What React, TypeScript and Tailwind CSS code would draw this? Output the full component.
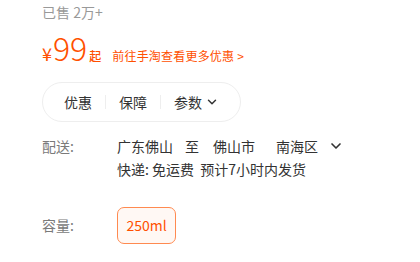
import { ChevronDown } from "lucide-react";

const font = { fontFamily: '"Noto Sans CJK SC", "Noto Sans", sans-serif' };

export default function App() {
  return (
    <div className="w-[420px] h-[262px] bg-white pl-[42px] text-[#333]" style={font}>
      {/* sales */}
      <div className="pt-[2px] text-[14px] leading-[20px] text-[#999]">已售 2万+</div>

      {/* price */}
      <div className="mt-[9px] flex items-baseline text-[#ff5000]">
        <span className="text-[18px] leading-none">¥</span>
        <span className="ml-[1px] text-[32px] leading-[32px] font-light">99</span>
        <span className="ml-[2px] text-[12px] font-medium">起</span>
        <span className="ml-[11px] text-[12px] tracking-[0.2px]">前往手淘查看更多优惠 &gt;</span>
      </div>

      {/* tabs */}
      <div className="mt-[17px] flex h-[40px] w-[199px] items-center rounded-full border border-[#eeeeee] text-[14px] text-[#333]">
        <span className="ml-[21px]">优惠</span>
        <span className="mx-[13px] h-[14px] w-px bg-[#eeeeee]" />
        <span>保障</span>
        <span className="mx-[13px] h-[14px] w-px bg-[#eeeeee]" />
        <span>参数</span>
        <ChevronDown className="ml-[3px] h-[14px] w-[14px]" strokeWidth={2.5} />
      </div>

      {/* delivery */}
      <div className="mt-[13px] flex text-[14px] leading-[22px]">
        <span className="w-[75px] text-[#7a7a7a]">配送:</span>
        <div className="flex flex-col">
          <div className="flex items-center">
            <span>广东佛山</span>
            <span className="ml-[12px]">至</span>
            <span className="ml-[14px]">佛山市</span>
            <span className="ml-[21px]">南海区</span>
            <ChevronDown className="ml-[10px] h-[16px] w-[16px]" strokeWidth={2.5} />
          </div>
          <div className="mt-[1px]">快递: 免运费&nbsp;&nbsp;预计7小时内发货</div>
        </div>
      </div>

      {/* capacity */}
      <div className="mt-[27px] flex items-center text-[14px]">
        <span className="w-[75px] text-[#7a7a7a]">容量:</span>
        <div className="flex h-[37px] w-[59px] items-center justify-center rounded-[7px] border border-[#ff8a50] bg-[#fff8f4] text-[#ff5000]">
          250ml
        </div>
      </div>
    </div>
  );
}
